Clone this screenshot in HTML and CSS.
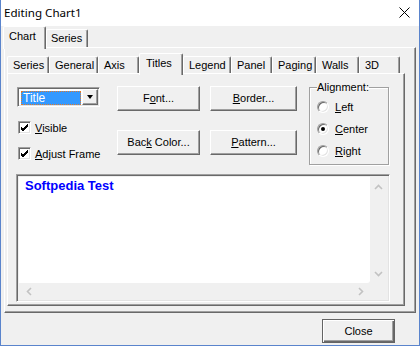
FILE: index.html
```html
<!DOCTYPE html>
<html>
<head>
<meta charset="utf-8">
<link rel="stylesheet" href="styles.css">
</head>
<body>
<div class="window">
  <div class="titlebar">
    <span class="title">Editing Chart1</span>
    <svg class="close-x" width="11" height="11" viewBox="0 0 11 11"><path d="M0.5 0.5 L10.5 10.5 M10.5 0.5 L0.5 10.5" stroke="#000" stroke-width="1" fill="none"/></svg>
  </div>
  <div class="client">
    <div class="tabs outer-tabs">
      <div class="tab sel w-chart">Chart</div>
      <div class="tab w-oseries">Series</div>
    </div>
    <div class="panel outer-panel">
      <div class="tabs inner-tabs">
        <div class="tab w42">Series</div>
        <div class="tab w49">General</div>
        <div class="tab w41">Axis</div>
        <div class="tab sel w44">Titles</div>
        <div class="tab w48">Legend</div>
        <div class="tab w41">Panel</div>
        <div class="tab w44">Paging</div>
        <div class="tab w43">Walls</div>
        <div class="tab w41">3D</div>
      </div>
      <div class="panel inner-panel">
        <div class="top-row">
          <div class="col col-left">
            <div class="combo">
              <div class="combo-field"><span class="combo-sel">Title</span></div>
              <div class="combo-btn"><span class="tri"></span></div>
            </div>
            <label class="check"><span class="box"><svg width="9" height="9" viewBox="0 0 9 9"><path d="M1 4 L3 6 L8 1 M1 5 L3 7 L8 2 M1 6 L3 8 L8 3" stroke="#000" stroke-width="1" fill="none"/></svg></span><span><u>V</u>isible</span></label>
            <label class="check"><span class="box"><svg width="9" height="9" viewBox="0 0 9 9"><path d="M1 4 L3 6 L8 1 M1 5 L3 7 L8 2 M1 6 L3 8 L8 3" stroke="#000" stroke-width="1" fill="none"/></svg></span><span><u>A</u>djust Frame</span></label>
          </div>
          <div class="col col-mid">
            <div class="btn"><span>F<u>o</u>nt...</span></div>
            <div class="btn"><span>Bac<u>k</u> Color...</span></div>
          </div>
          <div class="col col-mid2">
            <div class="btn"><span><u>B</u>order...</span></div>
            <div class="btn"><span><u>P</u>attern...</span></div>
          </div>
          <fieldset class="group">
            <legend>Alignment:</legend>
            <div class="radio"><span class="circle"></span><span><u>L</u>eft</span></div>
            <div class="radio"><span class="circle on"></span><span><u>C</u>enter</span></div>
            <div class="radio"><span class="circle"></span><span><u>R</u>ight</span></div>
          </fieldset>
        </div>
        <div class="memo">
          <div class="memo-text">Softpedia Test</div>
          <div class="vscroll">
            <svg width="9" height="6" viewBox="0 0 9 6"><path d="M1 5 L4.5 1.5 L8 5" stroke="#c2c2c2" stroke-width="1.6" fill="none"/></svg>
            <svg width="9" height="6" viewBox="0 0 9 6"><path d="M1 1 L4.5 4.5 L8 1" stroke="#c2c2c2" stroke-width="1.6" fill="none"/></svg>
          </div>
          <div class="hscroll">
            <svg width="6" height="9" viewBox="0 0 6 9"><path d="M5 1 L1.5 4.5 L5 8" stroke="#c2c2c2" stroke-width="1.6" fill="none"/></svg>
            <svg width="6" height="9" viewBox="0 0 6 9"><path d="M1 1 L4.5 4.5 L1 8" stroke="#c2c2c2" stroke-width="1.6" fill="none"/></svg>
          </div>
          <div class="corner"></div>
        </div>
      </div>
    </div>
    <div class="footer">
      <div class="btn close-btn"><span>Close</span></div>
    </div>
  </div>
</div>
</body>
</html>
```

FILE: styles.css
```css
* { box-sizing: border-box; }
html, body { margin: 0; padding: 0; }
body {
  width: 420px;
  height: 346px;
  overflow: hidden;
  font-family: "Liberation Sans", Arial, sans-serif;
  font-size: 11px;
  color: #000;
  background: #f0f0f0;
}
.window {
  width: 420px;
  height: 346px;
  border-left: 1px solid #5a84cc;
  border-right: 1px solid #5a84cc;
  border-bottom: 1px solid #5a84cc;
  display: flex;
  flex-direction: column;
}
.titlebar {
  height: 26px;
  background: #fff;
  display: flex;
  align-items: center;
  justify-content: space-between;
  padding: 0 9px 1px 3px;
  flex: none;
}
.title {
  font-family: "Noto Sans", "Open Sans", sans-serif;
  font-size: 11.6px;
  color: #000;
}
.close-x { display: block; }
.client {
  flex: 1;
  background: #f0f0f0;
  display: flex;
  flex-direction: column;
}
.tabs {
  display: flex;
  align-items: flex-end;
  position: relative;
  z-index: 1;
}
.tab {
  height: 17px;
  border-top: 1px solid #fff;
  border-left: 1px solid #fff;
  border-right: 1px solid #696969;
  box-shadow: inset -1px 0 #a0a0a0;
  border-radius: 2px 2px 0 0;
  display: flex;
  align-items: center;
  justify-content: flex-start;
  padding: 0 0 1px 5px;
  background: #f0f0f0;
  white-space: nowrap;
}
.tab.sel {
  height: 22px;
  margin-bottom: -2px;
  padding-bottom: 4px;
  padding-left: 6px;
}
.outer-tabs { height: 21px; padding-left: 2px; }
.outer-tabs .tab { height: 18px; padding-left: 4px; }
.outer-tabs .tab.sel { height: 23px; padding-left: 5px; }
.w-chart { width: 43px; }
.w-oseries { width: 42px; }
.inner-tabs { height: 25px; padding-left: 2px; }
.w41 { width: 41px; }
.w42 { width: 42px; }
.w43 { width: 43px; }
.w44 { width: 44px; }
.w48 { width: 48px; }
.w49 { width: 49px; }
.panel {
  border-top: 1px solid #fff;
  border-left: 1px solid #fff;
  border-right: 1px solid #696969;
  border-bottom: 1px solid #696969;
  box-shadow: inset -1px -1px #a0a0a0;
  background: #f0f0f0;
}
.outer-panel {
  margin-left: 3px;
  width: 412px;
  height: 266px;
  display: flex;
  flex-direction: column;
  flex: none;
}
.inner-panel {
  margin-left: 2px;
  width: 398px;
  height: 233px;
  padding: 7px 0 0 8px;
  flex: none;
}
.top-row {
  display: flex;
  align-items: flex-start;
  height: 84px;
  padding-left: 1px;
}
.col { display: flex; flex-direction: column; }
.col-left { width: 83px; margin-top: 6px; margin-right: 17px; }
.col-mid { width: 83px; margin-top: 5px; margin-right: 10px; gap: 19px; }
.col-mid2 { width: 87px; margin-top: 5px; margin-right: 12px; gap: 19px; }
.btn {
  height: 25px;
  background: #f0f0f0;
  border-top: 1px solid #fff;
  border-left: 1px solid #fff;
  border-right: 1px solid #696969;
  border-bottom: 1px solid #696969;
  box-shadow: inset -1px -1px #a0a0a0;
  display: flex;
  align-items: center;
  justify-content: center;
  padding-bottom: 1px;
  white-space: nowrap;
}
.combo {
  height: 20px;
  width: 83px;
  display: flex;
  background: #fff;
  border-top: 1px solid #a0a0a0;
  border-left: 1px solid #a0a0a0;
  border-right: 1px solid #fff;
  border-bottom: 1px solid #fff;
  box-shadow: inset 1px 1px #696969, inset -1px -1px #e3e3e3;
  padding: 2px;
}
.combo-field {
  flex: 1;
  padding: 1px;
}
.combo-sel {
  display: block;
  height: 14px;
  background: #3399ff;
  color: #fff;
  outline: 1px dotted #e07a2a;
  outline-offset: -1px;
  font-size: 12px;
  line-height: 14px;
  padding-left: 2px;
}
.combo-btn {
  width: 16px;
  background: #f0f0f0;
  border-top: 1px solid #fff;
  border-left: 1px solid #fff;
  border-right: 1px solid #696969;
  border-bottom: 1px solid #696969;
  box-shadow: inset -1px -1px #a0a0a0;
  display: flex;
  align-items: center;
  justify-content: center;
  margin: -1px -1px -1px 0;
}
.tri {
  width: 0; height: 0;
  border-left: 3.5px solid transparent;
  border-right: 3.5px solid transparent;
  border-top: 4px solid #000;
}
.check {
  display: flex;
  align-items: center;
  height: 13px;
  margin-left: 1px;
  white-space: nowrap;
}
.col-left .check:first-of-type { margin-top: 14px; }
.col-left .check + .check { margin-top: 13px; }
.box {
  width: 13px;
  height: 13px;
  margin-right: 4px;
  background: #fff;
  border-top: 1px solid #a0a0a0;
  border-left: 1px solid #a0a0a0;
  border-right: 1px solid #fff;
  border-bottom: 1px solid #fff;
  box-shadow: inset 1px 1px #696969, inset -1px -1px #e3e3e3;
  display: flex;
  align-items: center;
  justify-content: center;
  flex: none;
}
.box svg { display: block; }
.group {
  width: 80px;
  height: 84px;
  margin: 0;
  padding: 2px 0 0 7px;
  border: 1px solid #a0a0a0;
  box-shadow: inset 1px 1px #fff, 1px 1px #fff;
  min-width: 0;
}
.group legend {
  padding: 0;
  margin-left: 0;
  line-height: 13px;
}
.radio {
  display: flex;
  align-items: center;
  height: 22px;
}
.circle {
  width: 12px;
  height: 12px;
  border-radius: 50%;
  background: #fff;
  border: 1px solid;
  border-color: #a0a0a0 #fff #fff #a0a0a0;
  box-shadow: inset 1px 1px #696969, inset -1px -1px #e3e3e3;
  margin-right: 6px;
  position: relative;
  flex: none;
}
.circle.on::after {
  content: "";
  position: absolute;
  left: 3px;
  top: 3px;
  width: 4px;
  height: 4px;
  border-radius: 50%;
  background: #000;
}
.memo {
  margin-top: 9px;
  width: 374px;
  height: 128px;
  border-top: 1px solid #a0a0a0;
  border-left: 1px solid #a0a0a0;
  border-right: 1px solid #fff;
  border-bottom: 1px solid #fff;
  box-shadow: inset 1px 1px #696969, inset -1px -1px #e3e3e3;
  padding: 2px;
  display: grid;
  grid-template-columns: 1fr 17px;
  grid-template-rows: 1fr 16px;
  background: #f0f0f0;
}
.memo-text {
  background: #fff;
  color: #0000ff;
  font-weight: bold;
  font-size: 13px;
  line-height: 16px;
  padding: 1px 0 0 6px;
  border-bottom-right-radius: 3px;
}
.vscroll {
  display: flex;
  flex-direction: column;
  justify-content: space-between;
  align-items: center;
  padding: 7px 0 6px;
  background: #f0f0f0;
}
.vscroll svg, .hscroll svg { display: block; }
.hscroll {
  display: flex;
  justify-content: space-between;
  align-items: center;
  padding: 0 6px 0 7px;
  background: #f0f0f0;
}
.corner { background: #f0f0f0; }
.footer {
  flex: 1;
  display: flex;
  justify-content: flex-end;
  align-items: flex-start;
  padding: 6px 24px 0 0;
}
.close-btn {
  width: 73px;
  height: 24px;
  border: 1px solid #646464;
  box-shadow: inset 1px 1px #fff, inset -1px -1px #696969, inset -2px -2px #a0a0a0;
}
```
